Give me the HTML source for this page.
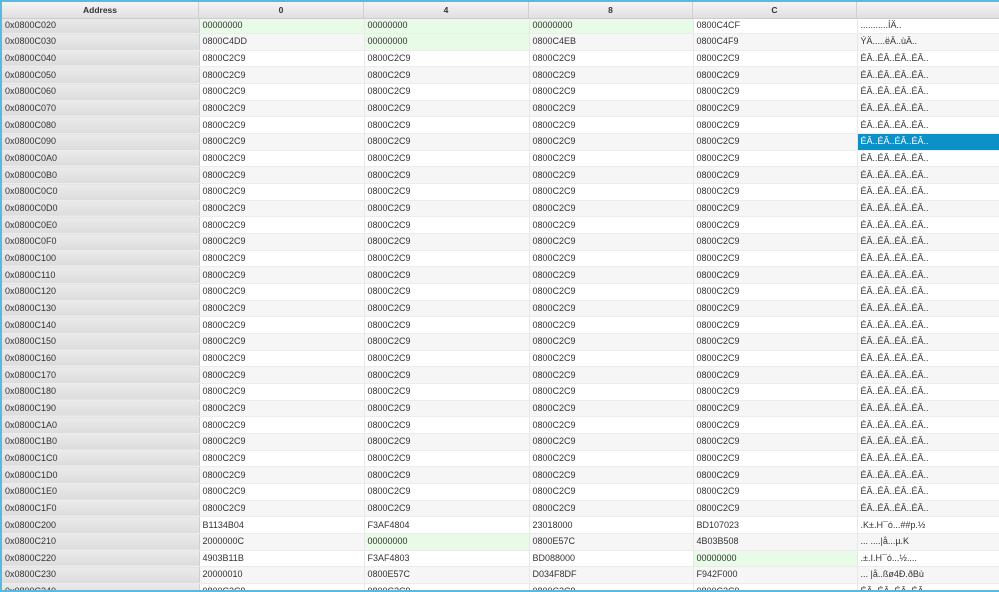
<!DOCTYPE html>
<html><head><meta charset="utf-8"><style>
*{margin:0;padding:0;box-sizing:border-box}
body{width:999px;height:592px;overflow:hidden;background:#fff;font-family:"Liberation Sans",sans-serif;font-size:9px;color:#333;position:relative}
#frame{position:absolute;left:0;top:0;width:999px;height:592px;border:2px solid #5bb8e0;border-right:none;overflow:hidden}
table{border-collapse:collapse;table-layout:fixed;position:absolute;left:0;top:15px;width:997px}
td{height:16.67px;padding:0 0 0 3px;border-right:1px solid #e8e8e8;border-bottom:1px solid #ececec;white-space:nowrap;overflow:hidden;line-height:15px}
td.a{background:linear-gradient(#ebebeb,#dcdcdc);border-right:1px solid #cfcfcf;color:#333}
tr:nth-child(even) td:not(.a){background:#f6f6f6}
td.g{background:#e7fbe7!important}
td.s{background:#0c90c8!important;color:#fff}
#hdr{position:absolute;left:0;top:0;width:997px;height:17px;background:linear-gradient(#f4f4f4,#e0e0e0);border-bottom:1px solid #ccc;display:flex;font-weight:bold;font-size:8.5px;line-height:17px;z-index:2}
#hdr div{text-align:center;border-right:1px solid #d0d0d0}
</style></head><body><div id="frame">
<div id="hdr"><div style="width:197px">Address</div><div style="width:165px">0</div><div style="width:165px">4</div><div style="width:164px">8</div><div style="width:164px">C</div><div style="width:142px;border:none"></div></div>
<table>
<colgroup><col style="width:197px"><col style="width:165px"><col style="width:165px"><col style="width:164px"><col style="width:164px"><col style="width:142px"></colgroup>
<tr><td class="a">0x0800C020</td><td class="g">00000000</td><td class="g">00000000</td><td class="g">00000000</td><td>0800C4CF</td><td>...........ÍÄ..</td></tr>
<tr><td class="a">0x0800C030</td><td>0800C4DD</td><td class="g">00000000</td><td>0800C4EB</td><td>0800C4F9</td><td>ÝÄ.....ëÄ..ùÄ..</td></tr>
<tr><td class="a">0x0800C040</td><td>0800C2C9</td><td>0800C2C9</td><td>0800C2C9</td><td>0800C2C9</td><td>ÉÂ..ÉÂ..ÉÂ..ÉÂ..</td></tr>
<tr><td class="a">0x0800C050</td><td>0800C2C9</td><td>0800C2C9</td><td>0800C2C9</td><td>0800C2C9</td><td>ÉÂ..ÉÂ..ÉÂ..ÉÂ..</td></tr>
<tr><td class="a">0x0800C060</td><td>0800C2C9</td><td>0800C2C9</td><td>0800C2C9</td><td>0800C2C9</td><td>ÉÂ..ÉÂ..ÉÂ..ÉÂ..</td></tr>
<tr><td class="a">0x0800C070</td><td>0800C2C9</td><td>0800C2C9</td><td>0800C2C9</td><td>0800C2C9</td><td>ÉÂ..ÉÂ..ÉÂ..ÉÂ..</td></tr>
<tr><td class="a">0x0800C080</td><td>0800C2C9</td><td>0800C2C9</td><td>0800C2C9</td><td>0800C2C9</td><td>ÉÂ..ÉÂ..ÉÂ..ÉÂ..</td></tr>
<tr><td class="a">0x0800C090</td><td>0800C2C9</td><td>0800C2C9</td><td>0800C2C9</td><td>0800C2C9</td><td class="s">ÉÂ..ÉÂ..ÉÂ..ÉÂ..</td></tr>
<tr><td class="a">0x0800C0A0</td><td>0800C2C9</td><td>0800C2C9</td><td>0800C2C9</td><td>0800C2C9</td><td>ÉÂ..ÉÂ..ÉÂ..ÉÂ..</td></tr>
<tr><td class="a">0x0800C0B0</td><td>0800C2C9</td><td>0800C2C9</td><td>0800C2C9</td><td>0800C2C9</td><td>ÉÂ..ÉÂ..ÉÂ..ÉÂ..</td></tr>
<tr><td class="a">0x0800C0C0</td><td>0800C2C9</td><td>0800C2C9</td><td>0800C2C9</td><td>0800C2C9</td><td>ÉÂ..ÉÂ..ÉÂ..ÉÂ..</td></tr>
<tr><td class="a">0x0800C0D0</td><td>0800C2C9</td><td>0800C2C9</td><td>0800C2C9</td><td>0800C2C9</td><td>ÉÂ..ÉÂ..ÉÂ..ÉÂ..</td></tr>
<tr><td class="a">0x0800C0E0</td><td>0800C2C9</td><td>0800C2C9</td><td>0800C2C9</td><td>0800C2C9</td><td>ÉÂ..ÉÂ..ÉÂ..ÉÂ..</td></tr>
<tr><td class="a">0x0800C0F0</td><td>0800C2C9</td><td>0800C2C9</td><td>0800C2C9</td><td>0800C2C9</td><td>ÉÂ..ÉÂ..ÉÂ..ÉÂ..</td></tr>
<tr><td class="a">0x0800C100</td><td>0800C2C9</td><td>0800C2C9</td><td>0800C2C9</td><td>0800C2C9</td><td>ÉÂ..ÉÂ..ÉÂ..ÉÂ..</td></tr>
<tr><td class="a">0x0800C110</td><td>0800C2C9</td><td>0800C2C9</td><td>0800C2C9</td><td>0800C2C9</td><td>ÉÂ..ÉÂ..ÉÂ..ÉÂ..</td></tr>
<tr><td class="a">0x0800C120</td><td>0800C2C9</td><td>0800C2C9</td><td>0800C2C9</td><td>0800C2C9</td><td>ÉÂ..ÉÂ..ÉÂ..ÉÂ..</td></tr>
<tr><td class="a">0x0800C130</td><td>0800C2C9</td><td>0800C2C9</td><td>0800C2C9</td><td>0800C2C9</td><td>ÉÂ..ÉÂ..ÉÂ..ÉÂ..</td></tr>
<tr><td class="a">0x0800C140</td><td>0800C2C9</td><td>0800C2C9</td><td>0800C2C9</td><td>0800C2C9</td><td>ÉÂ..ÉÂ..ÉÂ..ÉÂ..</td></tr>
<tr><td class="a">0x0800C150</td><td>0800C2C9</td><td>0800C2C9</td><td>0800C2C9</td><td>0800C2C9</td><td>ÉÂ..ÉÂ..ÉÂ..ÉÂ..</td></tr>
<tr><td class="a">0x0800C160</td><td>0800C2C9</td><td>0800C2C9</td><td>0800C2C9</td><td>0800C2C9</td><td>ÉÂ..ÉÂ..ÉÂ..ÉÂ..</td></tr>
<tr><td class="a">0x0800C170</td><td>0800C2C9</td><td>0800C2C9</td><td>0800C2C9</td><td>0800C2C9</td><td>ÉÂ..ÉÂ..ÉÂ..ÉÂ..</td></tr>
<tr><td class="a">0x0800C180</td><td>0800C2C9</td><td>0800C2C9</td><td>0800C2C9</td><td>0800C2C9</td><td>ÉÂ..ÉÂ..ÉÂ..ÉÂ..</td></tr>
<tr><td class="a">0x0800C190</td><td>0800C2C9</td><td>0800C2C9</td><td>0800C2C9</td><td>0800C2C9</td><td>ÉÂ..ÉÂ..ÉÂ..ÉÂ..</td></tr>
<tr><td class="a">0x0800C1A0</td><td>0800C2C9</td><td>0800C2C9</td><td>0800C2C9</td><td>0800C2C9</td><td>ÉÂ..ÉÂ..ÉÂ..ÉÂ..</td></tr>
<tr><td class="a">0x0800C1B0</td><td>0800C2C9</td><td>0800C2C9</td><td>0800C2C9</td><td>0800C2C9</td><td>ÉÂ..ÉÂ..ÉÂ..ÉÂ..</td></tr>
<tr><td class="a">0x0800C1C0</td><td>0800C2C9</td><td>0800C2C9</td><td>0800C2C9</td><td>0800C2C9</td><td>ÉÂ..ÉÂ..ÉÂ..ÉÂ..</td></tr>
<tr><td class="a">0x0800C1D0</td><td>0800C2C9</td><td>0800C2C9</td><td>0800C2C9</td><td>0800C2C9</td><td>ÉÂ..ÉÂ..ÉÂ..ÉÂ..</td></tr>
<tr><td class="a">0x0800C1E0</td><td>0800C2C9</td><td>0800C2C9</td><td>0800C2C9</td><td>0800C2C9</td><td>ÉÂ..ÉÂ..ÉÂ..ÉÂ..</td></tr>
<tr><td class="a">0x0800C1F0</td><td>0800C2C9</td><td>0800C2C9</td><td>0800C2C9</td><td>0800C2C9</td><td>ÉÂ..ÉÂ..ÉÂ..ÉÂ..</td></tr>
<tr><td class="a">0x0800C200</td><td>B1134B04</td><td>F3AF4804</td><td>23018000</td><td>BD107023</td><td>.K±.H¯ó...##p.½</td></tr>
<tr><td class="a">0x0800C210</td><td>2000000C</td><td class="g">00000000</td><td>0800E57C</td><td>4B03B508</td><td>... ....|å...µ.K</td></tr>
<tr><td class="a">0x0800C220</td><td>4903B11B</td><td>F3AF4803</td><td>BD088000</td><td class="g">00000000</td><td>.±.I.H¯ó...½....</td></tr>
<tr><td class="a">0x0800C230</td><td>20000010</td><td>0800E57C</td><td>D034F8DF</td><td>F942F000</td><td>... |å..ßø4Ð.ðBù</td></tr>
<tr><td class="a">0x0800C240</td><td>0800C2C9</td><td>0800C2C9</td><td>0800C2C9</td><td>0800C2C9</td><td>ÉÂ..ÉÂ..ÉÂ..ÉÂ..</td></tr>
</table>
</div></body></html>
